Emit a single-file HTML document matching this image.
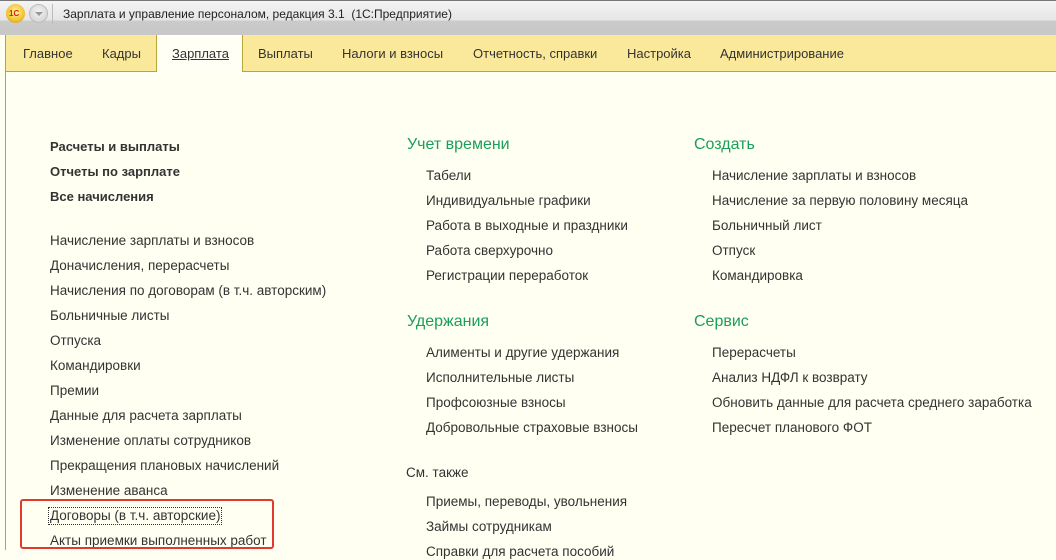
<!DOCTYPE html>
<html><head><meta charset="utf-8"><style>
*{margin:0;padding:0;box-sizing:border-box}
body{width:1056px;height:550px;overflow:hidden;background:#fffff2;font-family:"Liberation Sans","DejaVu Sans",sans-serif;color:#333;position:relative}
.t{position:absolute;font-size:13.5px;white-space:nowrap;line-height:16px}
.b{font-weight:bold;font-size:13px}
.h{position:absolute;font-size:16px;color:#1a9e5a;white-space:nowrap;line-height:18px}
#title{position:absolute;left:0;top:0;width:1056px;height:35px;background:linear-gradient(#f4f4f4,#e6e6e6 55%,#cacaca 60%,#c8c8c8);border-top:1px solid #777}
#tabs{position:absolute;left:5px;top:35px;width:1051px;height:37px;background:#fbe99b;border-bottom:1px solid #b9a53a;border-left:1px solid #b9a53a}
.tab{position:absolute;top:11px;font-size:13px;color:#333;white-space:nowrap}
#act{position:absolute;left:150px;top:0;width:87px;height:37px;background:#fffff5;border-left:1px solid #b9a53a;border-right:1px solid #b9a53a}
#frame{position:absolute;left:5px;top:72px;width:1px;height:478px;background:#b9a53a}
</style></head><body>
<div id="title">
<div style="position:absolute;left:6px;top:3px;width:19px;height:19px;border-radius:50%;background:radial-gradient(circle at 50% 40%,#fff6a0,#f2c12e 60%,#c98a10);"></div>
<div style="position:absolute;left:9px;top:8px;font-size:8px;font-weight:bold;color:#d21;">1С</div>
<div style="position:absolute;left:29px;top:3px;width:19px;height:19px;border-radius:50%;background:radial-gradient(circle at 50% 40%,#f4f4f4,#ccc);border:1px solid #bbb"></div>
<div style="position:absolute;left:35px;top:11px;width:0;height:0;border-left:4px solid transparent;border-right:4px solid transparent;border-top:4px solid #999"></div>
<div style="position:absolute;left:52px;top:3px;width:1px;height:20px;background:#bbb"></div>
<div style="position:absolute;left:63px;top:6px;font-size:12px;color:#222;white-space:nowrap">Зарплата и управление персоналом, редакция 3.1 &nbsp;(1С:Предприятие)</div>
</div>
<div id="tabs">
<div id="act"></div>
<span class="tab" style="left:17px">Главное</span>
<span class="tab" style="left:96px">Кадры</span>
<span class="tab" style="left:166px;text-decoration:underline">Зарплата</span>
<span class="tab" style="left:252px">Выплаты</span>
<span class="tab" style="left:336px">Налоги и взносы</span>
<span class="tab" style="left:467px">Отчетность, справки</span>
<span class="tab" style="left:621px">Настройка</span>
<span class="tab" style="left:714px">Администрирование</span>
</div>
<div id="frame"></div>

<div class="t b" style="left:50px;top:139px">Расчеты и выплаты</div>
<div class="t b" style="left:50px;top:164px">Отчеты по зарплате</div>
<div class="t b" style="left:50px;top:189px">Все начисления</div>
<div class="t" style="left:50px;top:233px">Начисление зарплаты и взносов</div>
<div class="t" style="left:50px;top:258px">Доначисления, перерасчеты</div>
<div class="t" style="left:50px;top:283px">Начисления по договорам (в т.ч. авторским)</div>
<div class="t" style="left:50px;top:308px">Больничные листы</div>
<div class="t" style="left:50px;top:333px">Отпуска</div>
<div class="t" style="left:50px;top:358px">Командировки</div>
<div class="t" style="left:50px;top:383px">Премии</div>
<div class="t" style="left:50px;top:408px">Данные для расчета зарплаты</div>
<div class="t" style="left:50px;top:433px">Изменение оплаты сотрудников</div>
<div class="t" style="left:50px;top:458px">Прекращения плановых начислений</div>
<div class="t" style="left:50px;top:483px">Изменение аванса</div>
<div class="t" style="left:48px;top:507px;border:1px dotted #333;padding:0 1px">Договоры (в т.ч. авторские)</div>
<div class="t" style="left:50px;top:533px">Акты приемки выполненных работ</div>
<div style="position:absolute;left:20px;top:499px;width:254px;height:50px;border:2px solid #e0392f;border-radius:3px"></div>

<div class="h" style="left:407px;top:136px">Учет времени</div>
<div class="t" style="left:426px;top:168px">Табели</div>
<div class="t" style="left:426px;top:193px">Индивидуальные графики</div>
<div class="t" style="left:426px;top:218px">Работа в выходные и праздники</div>
<div class="t" style="left:426px;top:243px">Работа сверхурочно</div>
<div class="t" style="left:426px;top:268px">Регистрации переработок</div>
<div class="h" style="left:407px;top:313px">Удержания</div>
<div class="t" style="left:426px;top:345px">Алименты и другие удержания</div>
<div class="t" style="left:426px;top:370px">Исполнительные листы</div>
<div class="t" style="left:426px;top:395px">Профсоюзные взносы</div>
<div class="t" style="left:426px;top:420px">Добровольные страховые взносы</div>
<div class="t" style="left:406px;top:465px">См. также</div>
<div class="t" style="left:426px;top:494px">Приемы, переводы, увольнения</div>
<div class="t" style="left:426px;top:519px">Займы сотрудникам</div>
<div class="t" style="left:426px;top:544px">Справки для расчета пособий</div>

<div class="h" style="left:694px;top:136px">Создать</div>
<div class="t" style="left:712px;top:168px">Начисление зарплаты и взносов</div>
<div class="t" style="left:712px;top:193px">Начисление за первую половину месяца</div>
<div class="t" style="left:712px;top:218px">Больничный лист</div>
<div class="t" style="left:712px;top:243px">Отпуск</div>
<div class="t" style="left:712px;top:268px">Командировка</div>
<div class="h" style="left:694px;top:313px">Сервис</div>
<div class="t" style="left:712px;top:345px">Перерасчеты</div>
<div class="t" style="left:712px;top:370px">Анализ НДФЛ к возврату</div>
<div class="t" style="left:712px;top:395px">Обновить данные для расчета среднего заработка</div>
<div class="t" style="left:712px;top:420px">Пересчет планового ФОТ</div>
</body></html>
